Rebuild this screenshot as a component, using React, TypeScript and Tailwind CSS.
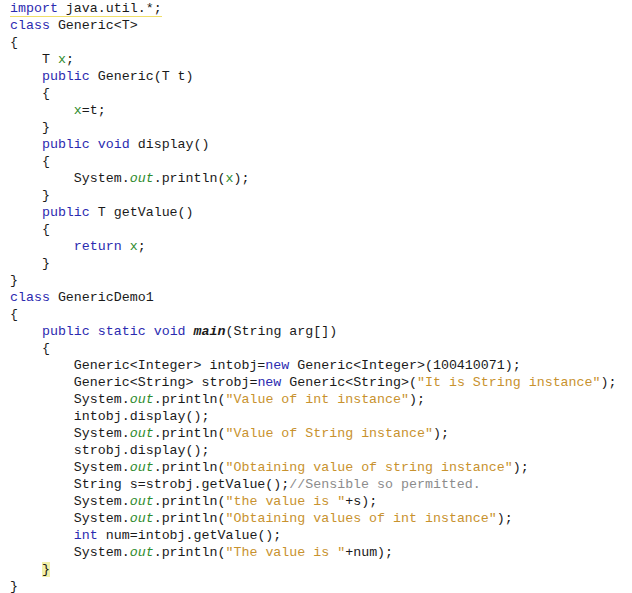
import React from "react";

type Tok = { t: string; c?: string };

const K = "text-[#2b2bb0]";
const F = "text-[#2e8b2e]";
const S = "text-[#c8922e]";
const C = "text-[#8c8c8c]";

const kw = (t: string): Tok => ({ t, c: K });
const fld = (t: string): Tok => ({ t, c: F });
const out = (): Tok => ({ t: "out", c: `${F} italic` });
const str = (t: string): Tok => ({ t, c: S });
const p = (t: string): Tok => ({ t });

const lines: Tok[][] = [
  [{ t: "import", c: K }, p(" java.util.*;")],
  [kw("class"), p(" Generic<T>")],
  [p("{")],
  [p("    T "), fld("x"), p(";")],
  [p("    "), kw("public"), p(" Generic(T t)")],
  [p("    {")],
  [p("        "), fld("x"), p("=t;")],
  [p("    }")],
  [p("    "), kw("public"), p(" "), kw("void"), p(" display()")],
  [p("    {")],
  [p("        System."), out(), p(".println("), fld("x"), p(");")],
  [p("    }")],
  [p("    "), kw("public"), p(" T getValue()")],
  [p("    {")],
  [p("        "), kw("return"), p(" "), fld("x"), p(";")],
  [p("    }")],
  [p("}")],
  [kw("class"), p(" GenericDemo1")],
  [p("{")],
  [p("    "), kw("public"), p(" "), kw("static"), p(" "), kw("void"), p(" "), { t: "main", c: "font-bold italic" }, p("(String arg[])")],
  [p("    {")],
  [p("        Generic<Integer> intobj="), kw("new"), p(" Generic<Integer>(100410071);")],
  [p("        Generic<String> strobj="), kw("new"), p(" Generic<String>("), str('"It is String instance"'), p(");")],
  [p("        System."), out(), p(".println("), str('"Value of int instance"'), p(");")],
  [p("        intobj.display();")],
  [p("        System."), out(), p(".println("), str('"Value of String instance"'), p(");")],
  [p("        strobj.display();")],
  [p("        System."), out(), p(".println("), str('"Obtaining value of string instance"'), p(");")],
  [p("        String s=strobj.getValue();"), { t: "//Sensible so permitted.", c: C }],
  [p("        System."), out(), p(".println("), str('"the value is "'), p("+s);")],
  [p("        System."), out(), p(".println("), str('"Obtaining values of int instance"'), p(");")],
  [p("        "), kw("int"), p(" num=intobj.getValue();")],
  [p("        System."), out(), p(".println("), str('"The value is "'), p("+num);")],
  [p("    "), { t: "}", c: "bg-[#f2f0a8]" }],
  [p("}")],
];

export default function App() {
  return (
    <div className="w-[632px] h-[593px] bg-white overflow-hidden pl-[10px] font-['Liberation_Mono',monospace] text-[13.3px] leading-[17px] text-[#1a1a1a]">
      {lines.map((line, i) => (
        <div key={i} className="whitespace-pre h-[17px]">
          {i === 0 ? (
            <span className="border-b border-[#f0df6a]">
              {line.map((tok, j) => (
                <span key={j} className={tok.c}>{tok.t}</span>
              ))}
            </span>
          ) : (
            line.map((tok, j) => (
              <span key={j} className={tok.c}>{tok.t}</span>
            ))
          )}
        </div>
      ))}
    </div>
  );
}
